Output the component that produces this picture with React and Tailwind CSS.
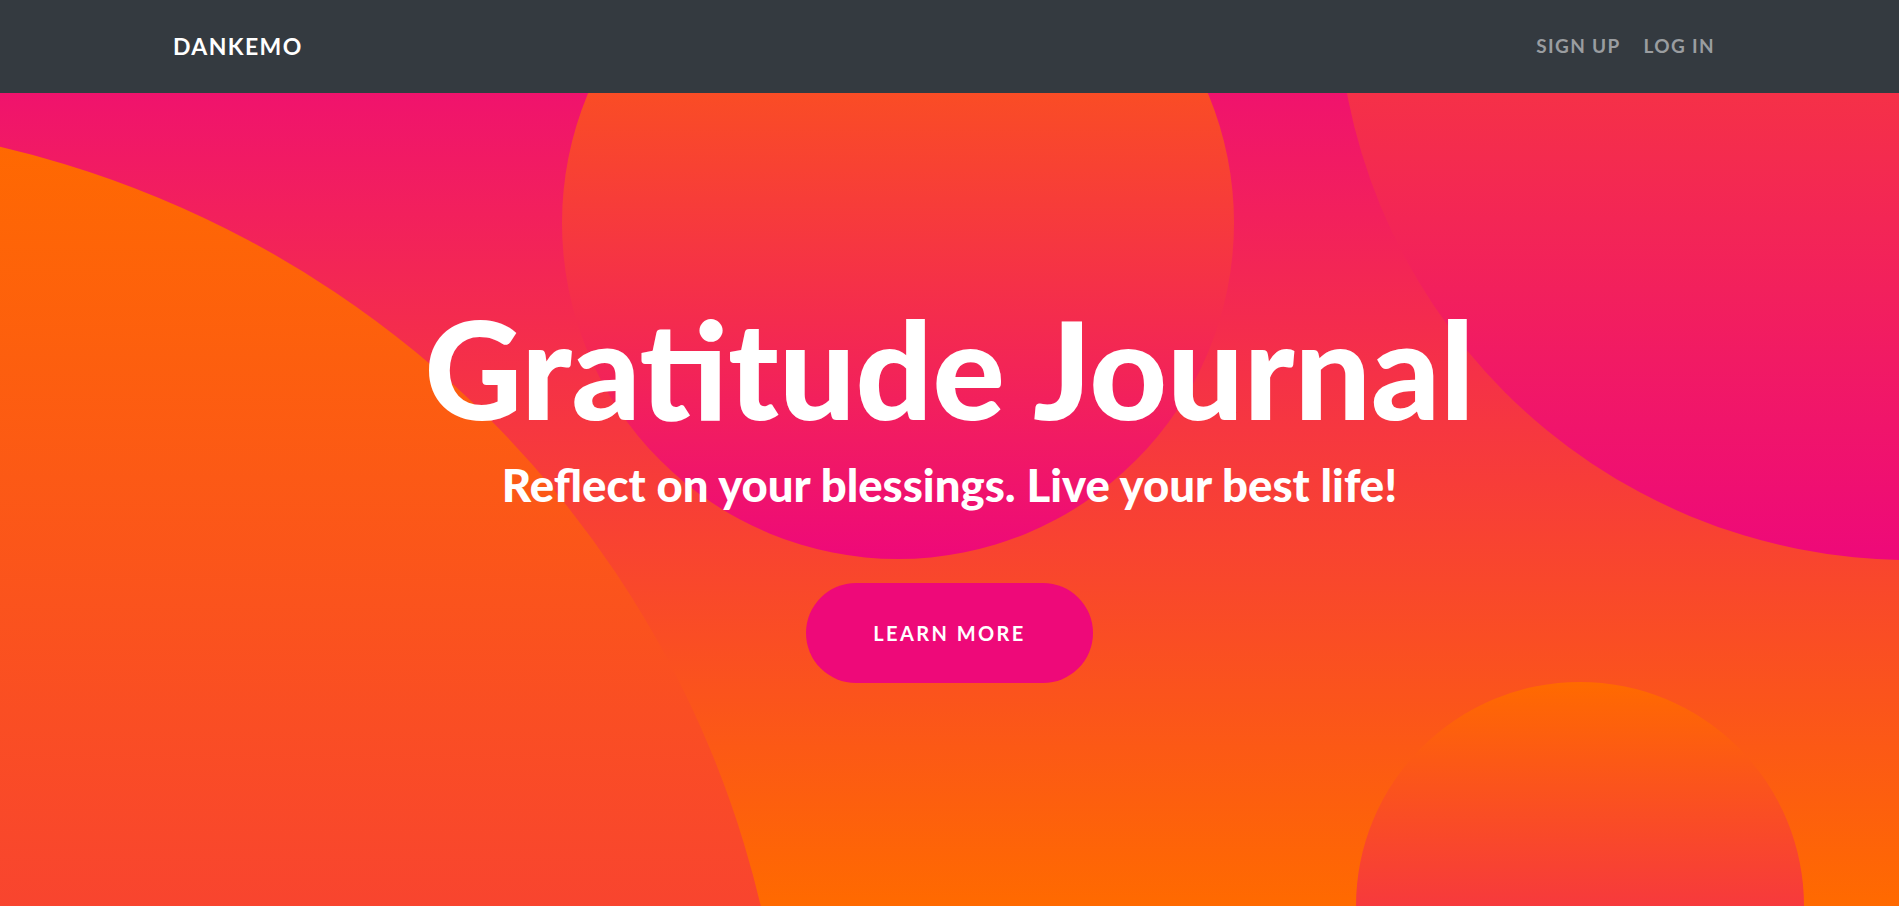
export default function App() {
  return (
    <div className="relative h-screen overflow-hidden bg-linear-to-b/srgb from-[#ee0979] to-[#ff6a00] font-['Lato',sans-serif]">
      {/* background blobs */}
      <div className="absolute left-[-1252px] top-[120px] size-[2040px] rounded-full bg-linear-to-b/srgb from-[#ff6a00] to-[#ee0979]" />
      <div className="absolute left-[562px] top-[-113px] size-[672px] rounded-full bg-linear-to-b/srgb from-[#ff6a00] to-[#ee0979]" />
      <div className="absolute left-[1337px] top-[-586px] size-[1146px] rounded-full bg-linear-to-b/srgb from-[#ff6a00] to-[#ee0979]" />
      <div className="absolute left-[1356px] top-[682px] size-[448px] rounded-full bg-linear-to-b/srgb from-[#ff6a00] to-[#ee0979]" />

      <nav className="relative z-10 flex h-[93px] items-center justify-between bg-[#343a40] pl-[173px] pr-[184px]">
        <a href="#" className="text-[23px] font-bold tracking-[0.06em] text-white">
          DANKEMO
        </a>
        <div className="flex gap-[23px] text-[19px] font-bold tracking-[0.07em] text-[#9a9da0]">
          <a href="#">SIGN UP</a>
          <a href="#">LOG IN</a>
        </div>
      </nav>

      <main className="relative z-10 flex flex-col items-center pt-[208px] text-white">
        <h1 className="text-[135px] font-black leading-none">Gratitude Journal</h1>
        <p className="mt-[26px] text-[45.5px] font-black leading-none">
          Reflect on your blessings. Live your best life!
        </p>
        <button className="mt-[75px] flex h-[100px] w-[287px] items-center justify-center rounded-full bg-[#ee0979] text-[20px] font-bold tracking-[0.12em] text-white">
          LEARN MORE
        </button>
      </main>
    </div>
  );
}
